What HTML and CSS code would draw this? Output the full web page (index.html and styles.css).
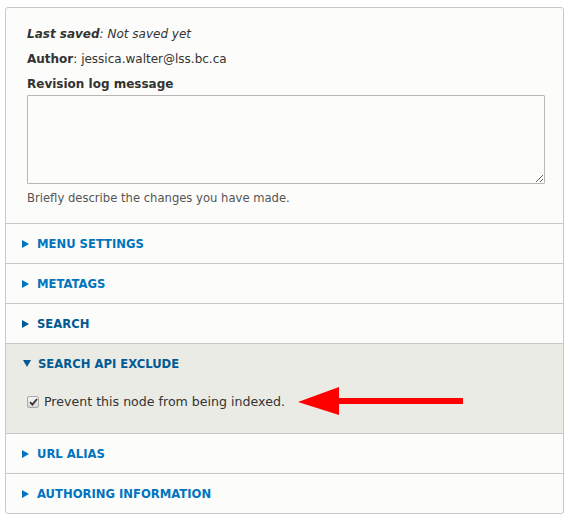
FILE: index.html
```html
<!DOCTYPE html>
<html>
<head>
<meta charset="utf-8">
<link rel="stylesheet" href="styles.css">
</head>
<body>
<div class="panel">
  <div class="meta">
    <p class="line"><em><strong>Last saved</strong>: Not saved yet</em></p>
    <p class="line"><strong>Author</strong>: jessica.walter@lss.bc.ca</p>
    <label class="label" for="log">Revision log message</label>
    <textarea id="log" class="log"></textarea>
    <p class="desc">Briefly describe the changes you have made.</p>
  </div>
  <div class="sec"><div class="sum"><span class="tri"></span>MENU SETTINGS</div></div>
  <div class="sec"><div class="sum"><span class="tri"></span>METATAGS</div></div>
  <div class="sec"><div class="sum dark"><span class="tri"></span>SEARCH</div></div>
  <div class="sec open">
    <div class="sum dark"><span class="tri down"></span>SEARCH API EXCLUDE</div>
    <div class="body">
      <span class="cb"><svg width="9" height="8" viewBox="0 0 9 8"><path d="M1 4.2 L3.4 6.6 L8 1" fill="none" stroke="#333" stroke-width="1.8"/></svg></span>
      <span class="cbl">Prevent this node from being indexed.</span>
      <svg class="arrow" width="166" height="28" viewBox="0 0 166 28"><polygon points="0,15 41,0 41,11 165,11 165,17 41,17 41,28" fill="#ff0000"/></svg>
    </div>
  </div>
  <div class="sec"><div class="sum"><span class="tri"></span>URL ALIAS</div></div>
  <div class="sec"><div class="sum"><span class="tri"></span>AUTHORING INFORMATION</div></div>
</div>
</body>
</html>
```
FILE: styles.css
```css
html, body { margin: 0; padding: 0; background: #fff; }
body { font-family: "DejaVu Sans", Verdana, sans-serif; color: #333; font-size: 12px; }
.panel {
  margin: 7px 0 0 5px;
  width: 557px;
  border: 1px solid #c8c8c8;
  border-radius: 3px;
  background: #fcfcfa;
}
.meta { padding: 19px 20px 18px 21px; }
.line { margin: 0 0 10px; line-height: 15px; }
.line strong { font-weight: bold; }
.label { display: block; font-weight: bold; line-height: 15px; margin-top: 3px; }
.log {
  display: block;
  box-sizing: border-box;
  width: 518px;
  height: 89px;
  margin: 3px 0 0 0;
  border: 1px solid #b8b8b8;
  border-radius: 1px;
  background: #fcfcfa;
  padding: 4px;
  font: inherit;
  resize: vertical;
}
.desc { margin: 7px 0 0; font-size: 11.6px; line-height: 14px; color: #555; }
.sec { border-top: 1px solid #c8c8c8; }
.sum {
  height: 39px;
  display: flex;
  align-items: center;
  padding-left: 16px;
  color: #0074bd;
  font-weight: bold;
  font-size: 11.6px;
}
.sum.dark { color: #005a93; }
.tri {
  width: 0; height: 0;
  border-left: 7px solid currentColor;
  border-top: 4px solid transparent;
  border-bottom: 4px solid transparent;
  margin-right: 8px;
}
.tri.down {
  border-top: 7px solid currentColor;
  border-left: 4px solid transparent;
  border-right: 4px solid transparent;
  border-bottom: 0;
  margin-right: 7px;
  margin-left: 1px;
}
.open { background: #ebebe6; }
.body {
  position: relative;
  height: 50px;
  display: flex;
  align-items: flex-start;
  padding: 12px 0 0 21px;
  box-sizing: border-box;
}
.cb {
  width: 10px; height: 10px;
  border: 1px solid #a8a8a8;
  border-radius: 2px;
  background: linear-gradient(#f6f6f6, #d8d8d8);
  display: flex; align-items: center; justify-content: center;
  margin-top: 1px;
}
.cbl { margin-left: 5px; color: #333; line-height: 14px; font-size: 12.6px; }
.arrow { position: absolute; left: 292px; top: 4px; }
```
